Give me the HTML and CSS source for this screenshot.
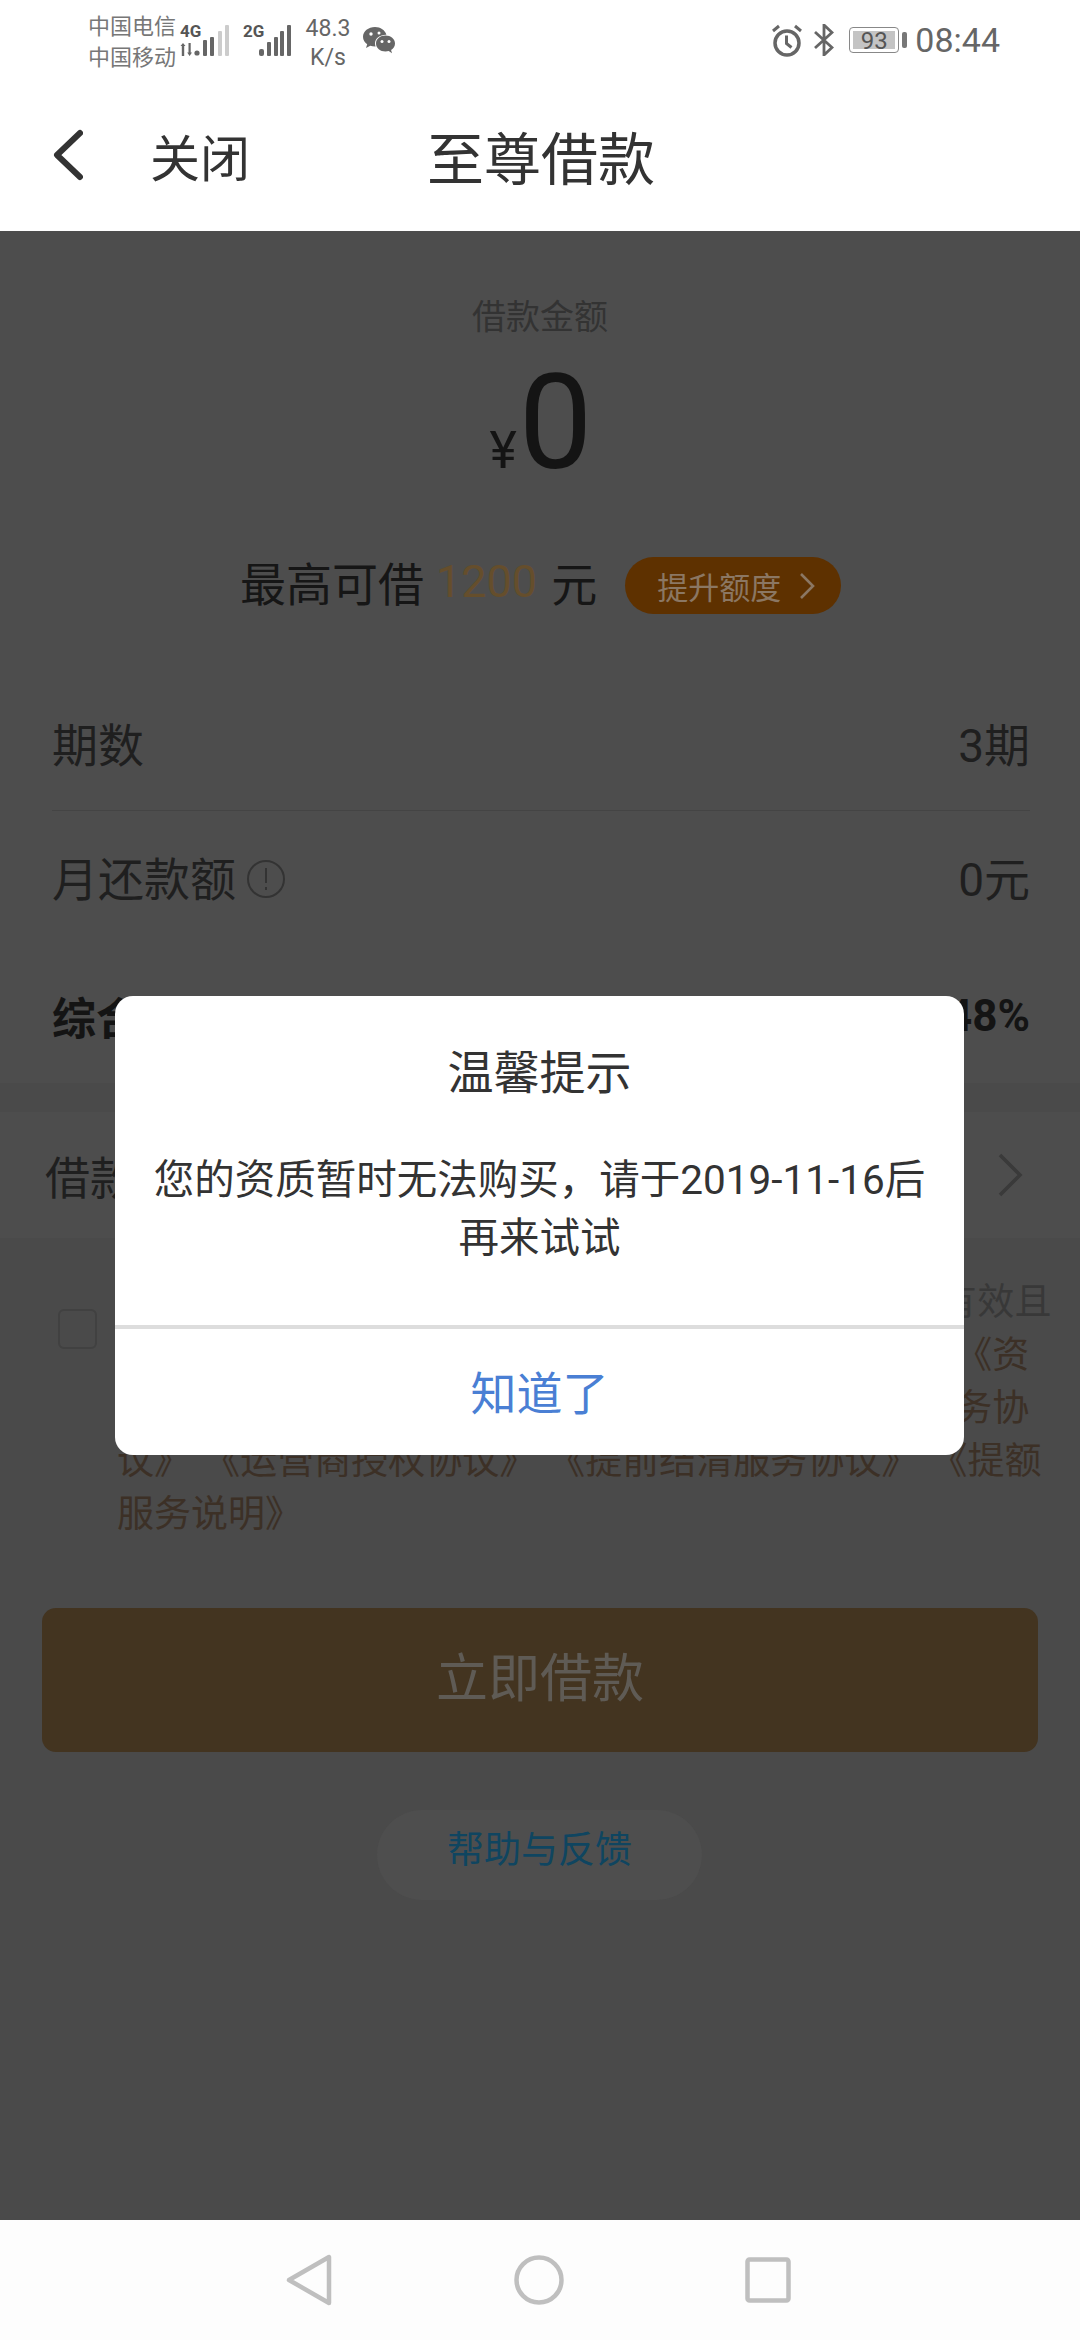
FILE: index.html
```html
<!DOCTYPE html>
<html lang="zh-CN">
<head>
    <meta charset="UTF-8">
    <meta name="viewport" content="width=device-width, initial-scale=1.0">
    <title>至尊借款</title>
    <link rel="stylesheet" href="styles.css">
</head>
<body>
    <!-- Status bar -->
    <div class="status-bar">
        <div class="status-left">
            <div class="carriers">
                <span>中国电信</span>
                <span>中国移动</span>
            </div>
            <div class="net net-first">
                <span class="net-type">4G</span>
                <svg class="net-arrows" width="20" height="13" viewBox="0 0 20 13">
                    <path d="M3 0L5.500 3H4.200V13H1.800V3H.5z" fill="#666"/>
                    <path d="M8.500 0h2.200v9.500H12L9.600 13 7.200 9.500h1.300z" fill="#666"/>
                    <circle cx="17" cy="10" r="2.600" fill="#666"/>
                </svg>
            </div>
            <svg class="bars" width="28" height="31" viewBox="0 0 28 31">
                <rect x="0" y="15" width="4" height="16" rx="1" fill="#666"/>
                <rect x="7" y="12" width="4" height="19" rx="1" fill="#666"/>
                <rect x="15" y="6" width="4" height="25" rx="1" fill="#ccc"/>
                <rect x="22" y="0" width="4" height="31" rx="1" fill="#ccc"/>
            </svg>
            <span class="net-type net-second">2G</span>
            <svg class="bars" width="32" height="31" viewBox="0 0 32 31">
                <rect x="0" y="24" width="5" height="7" rx="2" fill="#666"/>
                <rect x="8" y="17" width="4" height="14" rx="1" fill="#666"/>
                <rect x="15" y="12" width="4" height="19" rx="1" fill="#666"/>
                <rect x="21" y="6" width="4" height="25" rx="1" fill="#666"/>
                <rect x="28" y="0" width="4" height="31" rx="1" fill="#666"/>
            </svg>
            <div class="speed">
                <span>48.3</span>
                <span>K/s</span>
            </div>
            <svg class="wechat" width="32" height="27" viewBox="0 0 32 27">
                <path d="M12 0C5.400 0 0 4.400 0 9.800c0 3 1.600 5.600 4.200 7.400L3 21l4.300-2.200c1.400.4 3 .7 4.700.7h.6c-.4-1-.6-2-.6-3 0-5 4.800-8.800 10.800-8.800h.6C22.200 3.300 17.500 0 12 0z" fill="#666"/>
                <path d="M32 16.400c0-4.600-4.300-8-9.500-8s-9.500 3.400-9.500 8 4.300 8 9.500 8c1.100 0 2.200-.2 3.200-.5l3.300 2.300-.9-3.300c2.400-1.500 3.900-3.800 3.900-6.500z" fill="#666"/>
                <circle cx="8" cy="7" r="1.700" fill="#fff"/>
                <circle cx="16" cy="6" r="1.500" fill="#fff"/>
                <circle cx="19" cy="14.500" r="1.500" fill="#fff"/>
                <circle cx="26" cy="14.500" r="1.500" fill="#fff"/>
            </svg>
        </div>
        <div class="status-right">
            <svg width="32" height="33" viewBox="0 0 32 33" fill="none" stroke="#666">
                <circle cx="16" cy="19" r="12" stroke-width="3.500"/>
                <path d="M15.500 11.500v8l5 4" stroke-width="3"/>
                <path d="M2 7l6-5M30 7l-6-5" stroke-width="3"/>
            </svg>
            <svg class="bt" width="20" height="32" viewBox="0 0 20 32" fill="none" stroke="#666" stroke-width="2.800">
                <path d="M1 8l17 15.500L10 31V1l8 7.500L1 24"/>
            </svg>
            <div class="battery">
                <div class="battery-body"><span>93</span></div>
                <div class="battery-nub"></div>
            </div>
            <span class="clock">08:44</span>
        </div>
    </div>

    <!-- Title bar -->
    <div class="title-bar">
        <svg class="back" width="30" height="52" viewBox="0 0 30 52" fill="none" stroke="#333" stroke-width="6" stroke-linecap="round" stroke-linejoin="round">
            <path d="M27 4L4 26l23 22"/>
        </svg>
        <span class="close-text">关闭</span>
        <span class="page-title">至尊借款</span>
    </div>

    <div class="content">
        <div class="top-part">
            <div class="amount-label">借款金额</div>
            <div class="amount">
                <span class="yen">¥</span>
                <span class="amount-value">0</span>
            </div>
            <div class="limit">
                <span class="limit-text">最高可借</span>
                <span class="limit-num">1200</span>
                <span class="limit-text">元</span>
                <div class="raise-btn">
                    提升额度
                    <svg width="16" height="28" viewBox="0 0 16 28" fill="none" stroke="#8b7763" stroke-width="2.600">
                        <path d="M2 2l12 12L2 26"/>
                    </svg>
                </div>
            </div>

            <div class="rows">
                <div class="row row-line">
                    <span>期数</span>
                    <span>3期</span>
                </div>
                <div class="row row-month">
                    <span class="row-label">
                        月还款额
                        <svg width="40" height="40" viewBox="0 0 40 40" fill="none" stroke="#333">
                            <circle cx="20" cy="20" r="18" stroke-width="2"/>
                            <path d="M20 9v15M20 28v3" stroke-width="2"/>
                        </svg>
                    </span>
                    <span>0元</span>
                </div>
                <div class="row row-rate">
                    <span>综合年化利率</span>
                    <span>20.48%</span>
                </div>
            </div>
        </div>

        <div class="purpose">
            <span>借款用途</span>
            <svg width="26" height="44" viewBox="0 0 26 44" fill="none" stroke="#3a3a3a" stroke-width="3.500">
                <path d="M3 2l20 20L3 42"/>
            </svg>
        </div>

        <div class="agree">
            <div class="checkbox"></div>
            <div class="agree-text">
                <div class="agree-first">本人承诺所提供的资料真实、准确、完整、合法、有效且</div>
                <div>请您仔细阅读并同意以下协议： 《借款服务合同》 《资</div>
                <div>质审核授权书》 《个人信息使用授权书》 《委托服务协</div>
                <div>议》 《运营商授权协议》 《提前结清服务协议》 《提额</div>
                <div>服务说明》</div>
            </div>
        </div>

        <div class="submit-btn">立即借款</div>
        <div class="help-btn">帮助与反馈</div>
    </div>

    <!-- Bottom navigation -->
    <div class="nav-bar">
        <svg width="46" height="52" viewBox="0 0 46 52" fill="none" stroke="#bfbfbf" stroke-width="4.500" stroke-linejoin="round">
            <path d="M3 26L43 3v46z"/>
        </svg>
        <svg width="50" height="50" viewBox="0 0 50 50" fill="none" stroke="#bfbfbf" stroke-width="4.500">
            <circle cx="25" cy="25" r="22.500"/>
        </svg>
        <svg width="46" height="46" viewBox="0 0 46 46" fill="none" stroke="#bfbfbf" stroke-width="4.500" stroke-linejoin="round">
            <rect x="2.500" y="2.500" width="41" height="41" rx="2"/>
        </svg>
    </div>

    <!-- Dialog -->
    <div class="dialog">
        <div class="dialog-title">温馨提示</div>
        <div class="dialog-msg">您的资质暂时无法购买，请于2019-11-16后再来试试</div>
        <div class="dialog-btn">知道了</div>
    </div>
</body>
</html>
```
FILE: styles.css
```css
* {
    box-sizing: border-box;
}

body {
    width: 1080px;
    height: 2340px;
    margin: 0;
    position: relative;
    display: flex;
    flex-direction: column;
    overflow: hidden;
    background-color: #4a4a4a;
    font-family: Roboto, "Noto Sans CJK SC", sans-serif;
    color: #161616;
}

/* Status bar */
.status-bar {
    height: 72px;
    flex-shrink: 0;
    display: flex;
    justify-content: space-between;
    align-items: flex-start;
    padding: 0 80px 0 88px;
    background-color: #fff;
    color: #666;
}

.status-left {
    display: flex;
    align-items: flex-start;
}

.carriers {
    display: flex;
    flex-direction: column;
    width: 92px;
    padding-top: 11px;
    font-size: 22px;
    line-height: 31px;
    color: #777;
}

.net {
    width: 23px;
    height: 30px;
}

.net-type {
    display: block;
    padding-top: 22px;
    font-size: 17px;
    font-weight: 700;
    line-height: 18px;
    color: #555;
}

.net-first {
    width: 23px;
}

.net-arrows {
    display: block;
    margin-top: 3px;
}

.bars {
    margin-top: 25px;
}

.net-second {
    margin-left: 12px;
    width: 16px;
}

.speed {
    display: flex;
    flex-direction: column;
    align-items: center;
    width: 42px;
    margin-left: 16px;
    padding-top: 14px;
    font-size: 23px;
    line-height: 29px;
}

.wechat {
    margin: 27px 0 0 14px;
}

.status-right {
    display: flex;
    align-items: center;
    height: 80px;
}

.bt {
    margin-left: 11px;
}

.battery {
    display: flex;
    align-items: center;
    margin-left: 15px;
}

.battery-body {
    width: 50px;
    height: 26px;
    padding: 3px;
    border: 1.5px solid #888;
    border-radius: 4px;
}

.battery-body span {
    display: block;
    height: 100%;
    background-color: #c4c4c4;
    font-size: 24px;
    line-height: 20px;
    text-align: center;
    color: #555;
}

.battery-nub {
    width: 5px;
    height: 16px;
    margin-left: 3px;
    border-radius: 2px;
    background-color: #777;
}

.clock {
    margin-left: 8px;
    font-size: 34px;
    color: #666;
}

/* Title bar */
.title-bar {
    height: 159px;
    flex-shrink: 0;
    display: flex;
    align-items: center;
    padding: 6px 0 0 53px;
    background-color: #fff;
    color: #333;
}

.close-text {
    width: 277px;
    margin-left: 67px;
    font-size: 50px;
}

.page-title {
    font-size: 57px;
}

.content {
    flex: 1;
    display: flex;
    flex-direction: column;
}

.top-part {
    height: 852px;
    padding-top: 61px;
    background-color: #4d4d4d;
}

.amount-label {
    font-size: 34px;
    line-height: 50px;
    text-align: center;
    color: #333;
}

.amount {
    display: flex;
    justify-content: center;
    align-items: baseline;
    height: 130px;
    margin-top: 16px;
    padding-left: 2px;
}

.yen {
    font-size: 52px;
    line-height: 130px;
    color: #141414;
}

.amount-value {
    margin-left: 2px;
    font-size: 131px;
    line-height: 130px;
    color: #141414;
}

.limit {
    display: flex;
    align-items: center;
    height: 57px;
    margin-top: 69px;
    padding-left: 240px;
    font-size: 46px;
}

.limit-text {
    margin-bottom: 9px;
}

.limit-num {
    margin: 0 14px 9px 12px;
    font-size: 45px;
    color: #654e2c;
}

.raise-btn {
    display: flex;
    align-items: center;
    width: 216px;
    height: 57px;
    margin-left: 28px;
    padding-left: 32px;
    border-radius: 29px;
    background-color: #5e3100;
    font-size: 31px;
    color: #8b7763;
}

.raise-btn svg {
    margin-left: 18px;
}

.rows {
    margin-top: 70px;
    padding: 0 50px 0 52px;
    font-size: 46px;
    color: #1f1f1f;
}

.row {
    display: flex;
    justify-content: space-between;
    align-items: center;
}

.row-line {
    height: 127px;
    padding-bottom: 10px;
    border-bottom: 1px solid #444;
}

.row-month {
    height: 136px;
    padding-bottom: 6px;
}

.row-label {
    display: flex;
    align-items: center;
}

.row-label svg {
    margin: 6px 0 0 10px;
}

.row-rate {
    height: 138px;
    font-size: 44px;
    font-weight: 700;
    color: #141414;
}

.purpose {
    display: flex;
    justify-content: space-between;
    align-items: center;
    height: 126px;
    margin-top: 29px;
    padding: 0 57px 0 45px;
    background-color: #4d4d4d;
    font-size: 45px;
    color: #1f1f1f;
}

/* Agreement */
.agree {
    display: flex;
    margin-top: 38px;
    padding-left: 58px;
}

.checkbox {
    width: 39px;
    height: 40px;
    margin-top: 33px;
    border: 2px solid #414141;
    border-radius: 6px;
}

.agree-text {
    margin-left: 20px;
    font-size: 37px;
    line-height: 53px;
    word-spacing: 3px;
    white-space: nowrap;
    color: #3c3026;
}

.agree-first {
    letter-spacing: 0.4px;
    color: #383838;
}

.submit-btn {
    display: flex;
    justify-content: center;
    align-items: center;
    height: 144px;
    margin: 67px 42px 0 42px;
    padding-bottom: 12px;
    border-radius: 14px;
    background-color: #433420;
    font-size: 52px;
    color: #5f5b55;
}

.help-btn {
    display: flex;
    justify-content: center;
    align-items: center;
    width: 325px;
    height: 90px;
    margin: 58px auto 0 377px;
    padding-bottom: 17px;
    border-radius: 45px;
    background-color: #4e4e4e;
    font-size: 37px;
    color: #0f4560;
}

/* Bottom navigation */
.nav-bar {
    height: 120px;
    flex-shrink: 0;
    display: flex;
    align-items: center;
    justify-content: space-between;
    padding: 0 289px 0 286px;
    background-color: #fdfdfd;
}

/* Dialog */
.dialog {
    position: absolute;
    top: 996px;
    left: 115px;
    display: flex;
    flex-direction: column;
    width: 849px;
    height: 459px;
    border-radius: 18px;
    background-color: #fff;
    color: #333;
}

.dialog-title {
    margin-top: 47px;
    font-size: 46px;
    line-height: 60px;
    text-align: center;
}

.dialog-msg {
    height: 226px;
    padding: 48px 30px 0 30px;
    border-bottom: 4px solid #ddd;
    font-size: 40.5px;
    line-height: 58px;
    text-align: center;
}

.dialog-btn {
    flex: 1;
    display: flex;
    justify-content: center;
    align-items: center;
    padding-bottom: 4px;
    font-size: 46px;
    color: #4a7fd4;
}
```
